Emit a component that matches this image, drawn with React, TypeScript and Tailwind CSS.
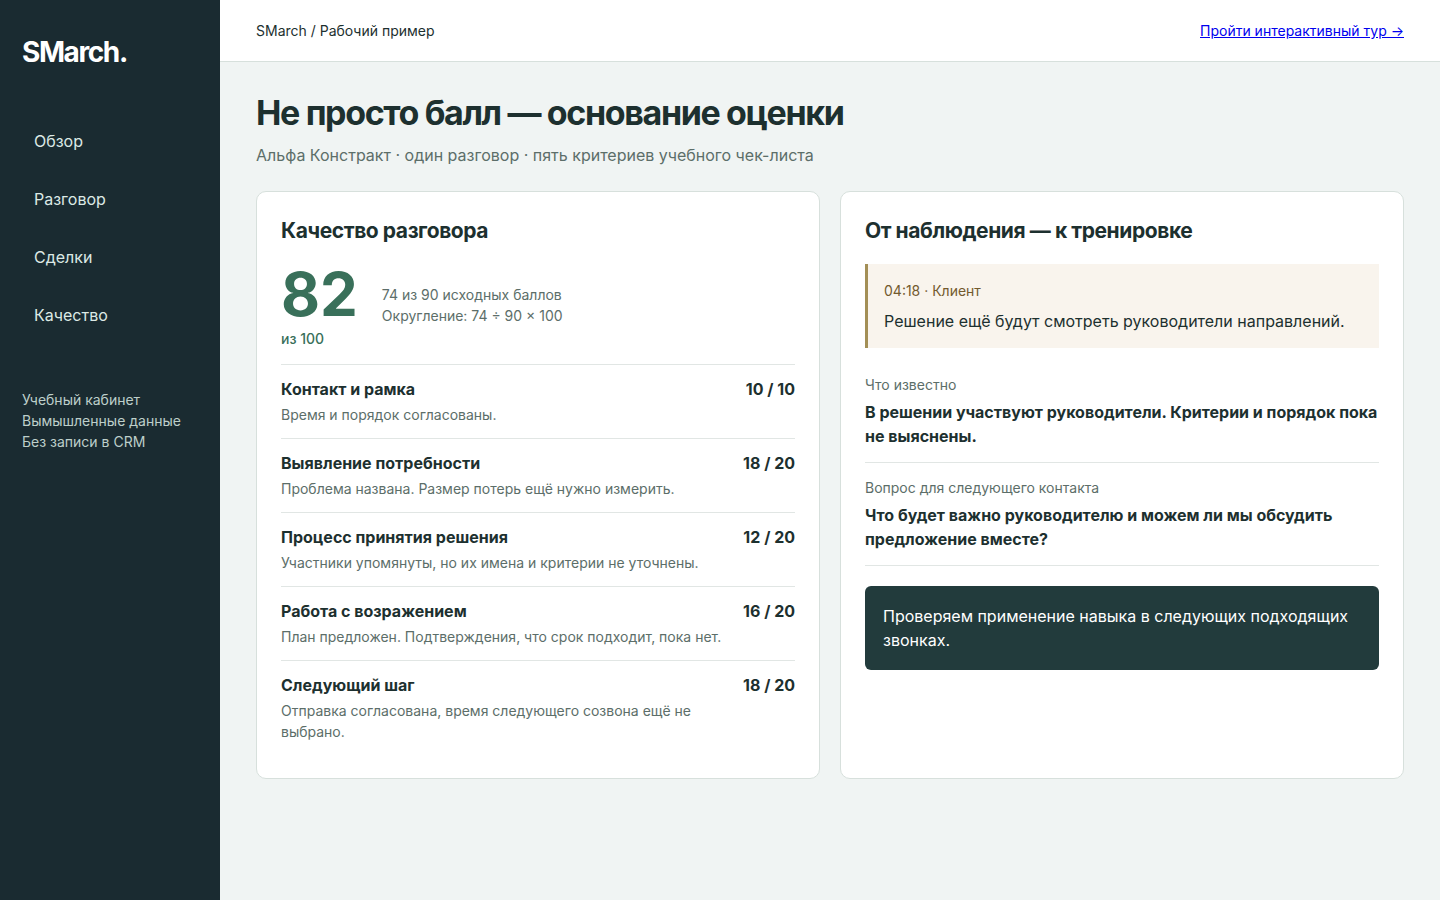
const nav = ["Обзор", "Разговор", "Сделки", "Качество"];

const criteria = [
  { title: "Контакт и рамка", score: "10 / 10", note: "Время и порядок согласованы." },
  { title: "Выявление потребности", score: "18 / 20", note: "Проблема названа. Размер потерь ещё нужно измерить." },
  { title: "Процесс принятия решения", score: "12 / 20", note: "Участники упомянуты, но их имена и критерии не уточнены." },
  { title: "Работа с возражением", score: "16 / 20", note: "План предложен. Подтверждения, что срок подходит, пока нет." },
  { title: "Следующий шаг", score: "18 / 20", note: "Отправка согласована, время следующего созвона ещё не выбрано." },
];

const findings = [
  { label: "Что известно", text: "В решении участвуют руководители. Критерии и порядок пока не выяснены." },
  { label: "Вопрос для следующего контакта", text: "Что будет важно руководителю и можем ли мы обсудить предложение вместе?" },
];

function Sidebar() {
  return (
    <aside className="w-[220px] shrink-0 bg-[#1a2b31] px-[22px] pt-8 text-[#dce9e5]">
      <div className="text-[28px] leading-10 font-bold tracking-[-0.05em] text-white">SMarch.</div>
      <nav className="mt-[45px] flex flex-col gap-2.5">
        {nav.map((item) => (
          <a key={item} href="#" className="px-3 py-3 text-base leading-6">
            {item}
          </a>
        ))}
      </nav>
      <p className="mt-[50px] text-sm leading-[21px] text-[#bdcfca]">
        Учебный кабинет
        <br />
        Вымышленные данные
        <br />
        Без записи в CRM
      </p>
    </aside>
  );
}

export default function App() {
  return (
    <div className="flex min-h-screen bg-[#f0f4f3] font-[Inter,sans-serif] text-base leading-6 text-[#1d302f]">
      <Sidebar />
      <div className="min-w-0 flex-1">
        <header className="flex items-center justify-between border-b border-[#d7e0dc] bg-white px-9 py-5 text-sm leading-[21px]">
          <span>SMarch / Рабочий пример</span>
          <a href="#" className="text-[#0000ee] underline">
            Пройти интерактивный тур →
          </a>
        </header>
        <main className="px-9 pt-[30px] pb-9">
          <h1 className="text-[34px] leading-[42px] font-bold tracking-[-0.04em]">Не просто балл — основание оценки</h1>
          <p className="mt-[9px] text-[#5c6e69]">Альфа Констракт · один разговор · пять критериев учебного чек-листа</p>
          <div className="mt-6 grid grid-cols-2 gap-5">
            <section className="rounded-[10px] border border-[#d7e0dc] bg-white p-6">
              <h2 className="text-[21px] leading-[30px] font-bold tracking-[-0.02em]">Качество разговора</h2>
              <div className="mt-3.5 flex items-center gap-6 pb-[15px]">
                <div className="text-[#39705a]">
                  <div className="text-[60px] leading-[68px] font-bold">82</div>
                  <div className="text-sm leading-[21px] font-medium">из 100</div>
                </div>
                <p className="text-sm leading-[21px] text-[#5c6e69]">
                  74 из 90 исходных баллов
                  <br />
                  Округление: 74 ÷ 90 × 100
                </p>
              </div>
              <ul>
                {criteria.map((c) => (
                  <li key={c.title} className="flex justify-between gap-3 border-t border-[#e1e6e4] pt-3 pb-[13px] last:pb-3">
                    <div>
                      <h3 className="font-bold">{c.title}</h3>
                      <p className="mt-[3px] text-sm leading-[21px] text-[#5c6e69]">{c.note}</p>
                    </div>
                    <strong className="shrink-0">{c.score}</strong>
                  </li>
                ))}
              </ul>
            </section>
            <section className="rounded-[10px] border border-[#d7e0dc] bg-white p-6">
              <h2 className="text-[21px] leading-[30px] font-bold tracking-[-0.02em]">От наблюдения — к тренировке</h2>
              <blockquote className="mt-[18px] border-l-[3px] border-[#a38f56] bg-[#f9f4ed] px-4 pt-4 pb-[15px]">
                <div className="text-sm leading-[21px] text-[#735a2e]">04:18 · Клиент</div>
                <p className="mt-2">Решение ещё будут смотреть руководители направлений.</p>
              </blockquote>
              <div className="mt-3">
                {findings.map((f) => (
                  <div key={f.label} className="border-b border-[#e1e6e4] py-3.5">
                    <div className="text-sm leading-[21px] text-[#5c6e69]">{f.label}</div>
                    <p className="mt-[5px] font-bold">{f.text}</p>
                  </div>
                ))}
              </div>
              <p className="mt-5 rounded-md bg-[#223b3c] p-[18px] text-white">
                Проверяем применение навыка в следующих подходящих звонках.
              </p>
            </section>
          </div>
        </main>
      </div>
    </div>
  );
}
